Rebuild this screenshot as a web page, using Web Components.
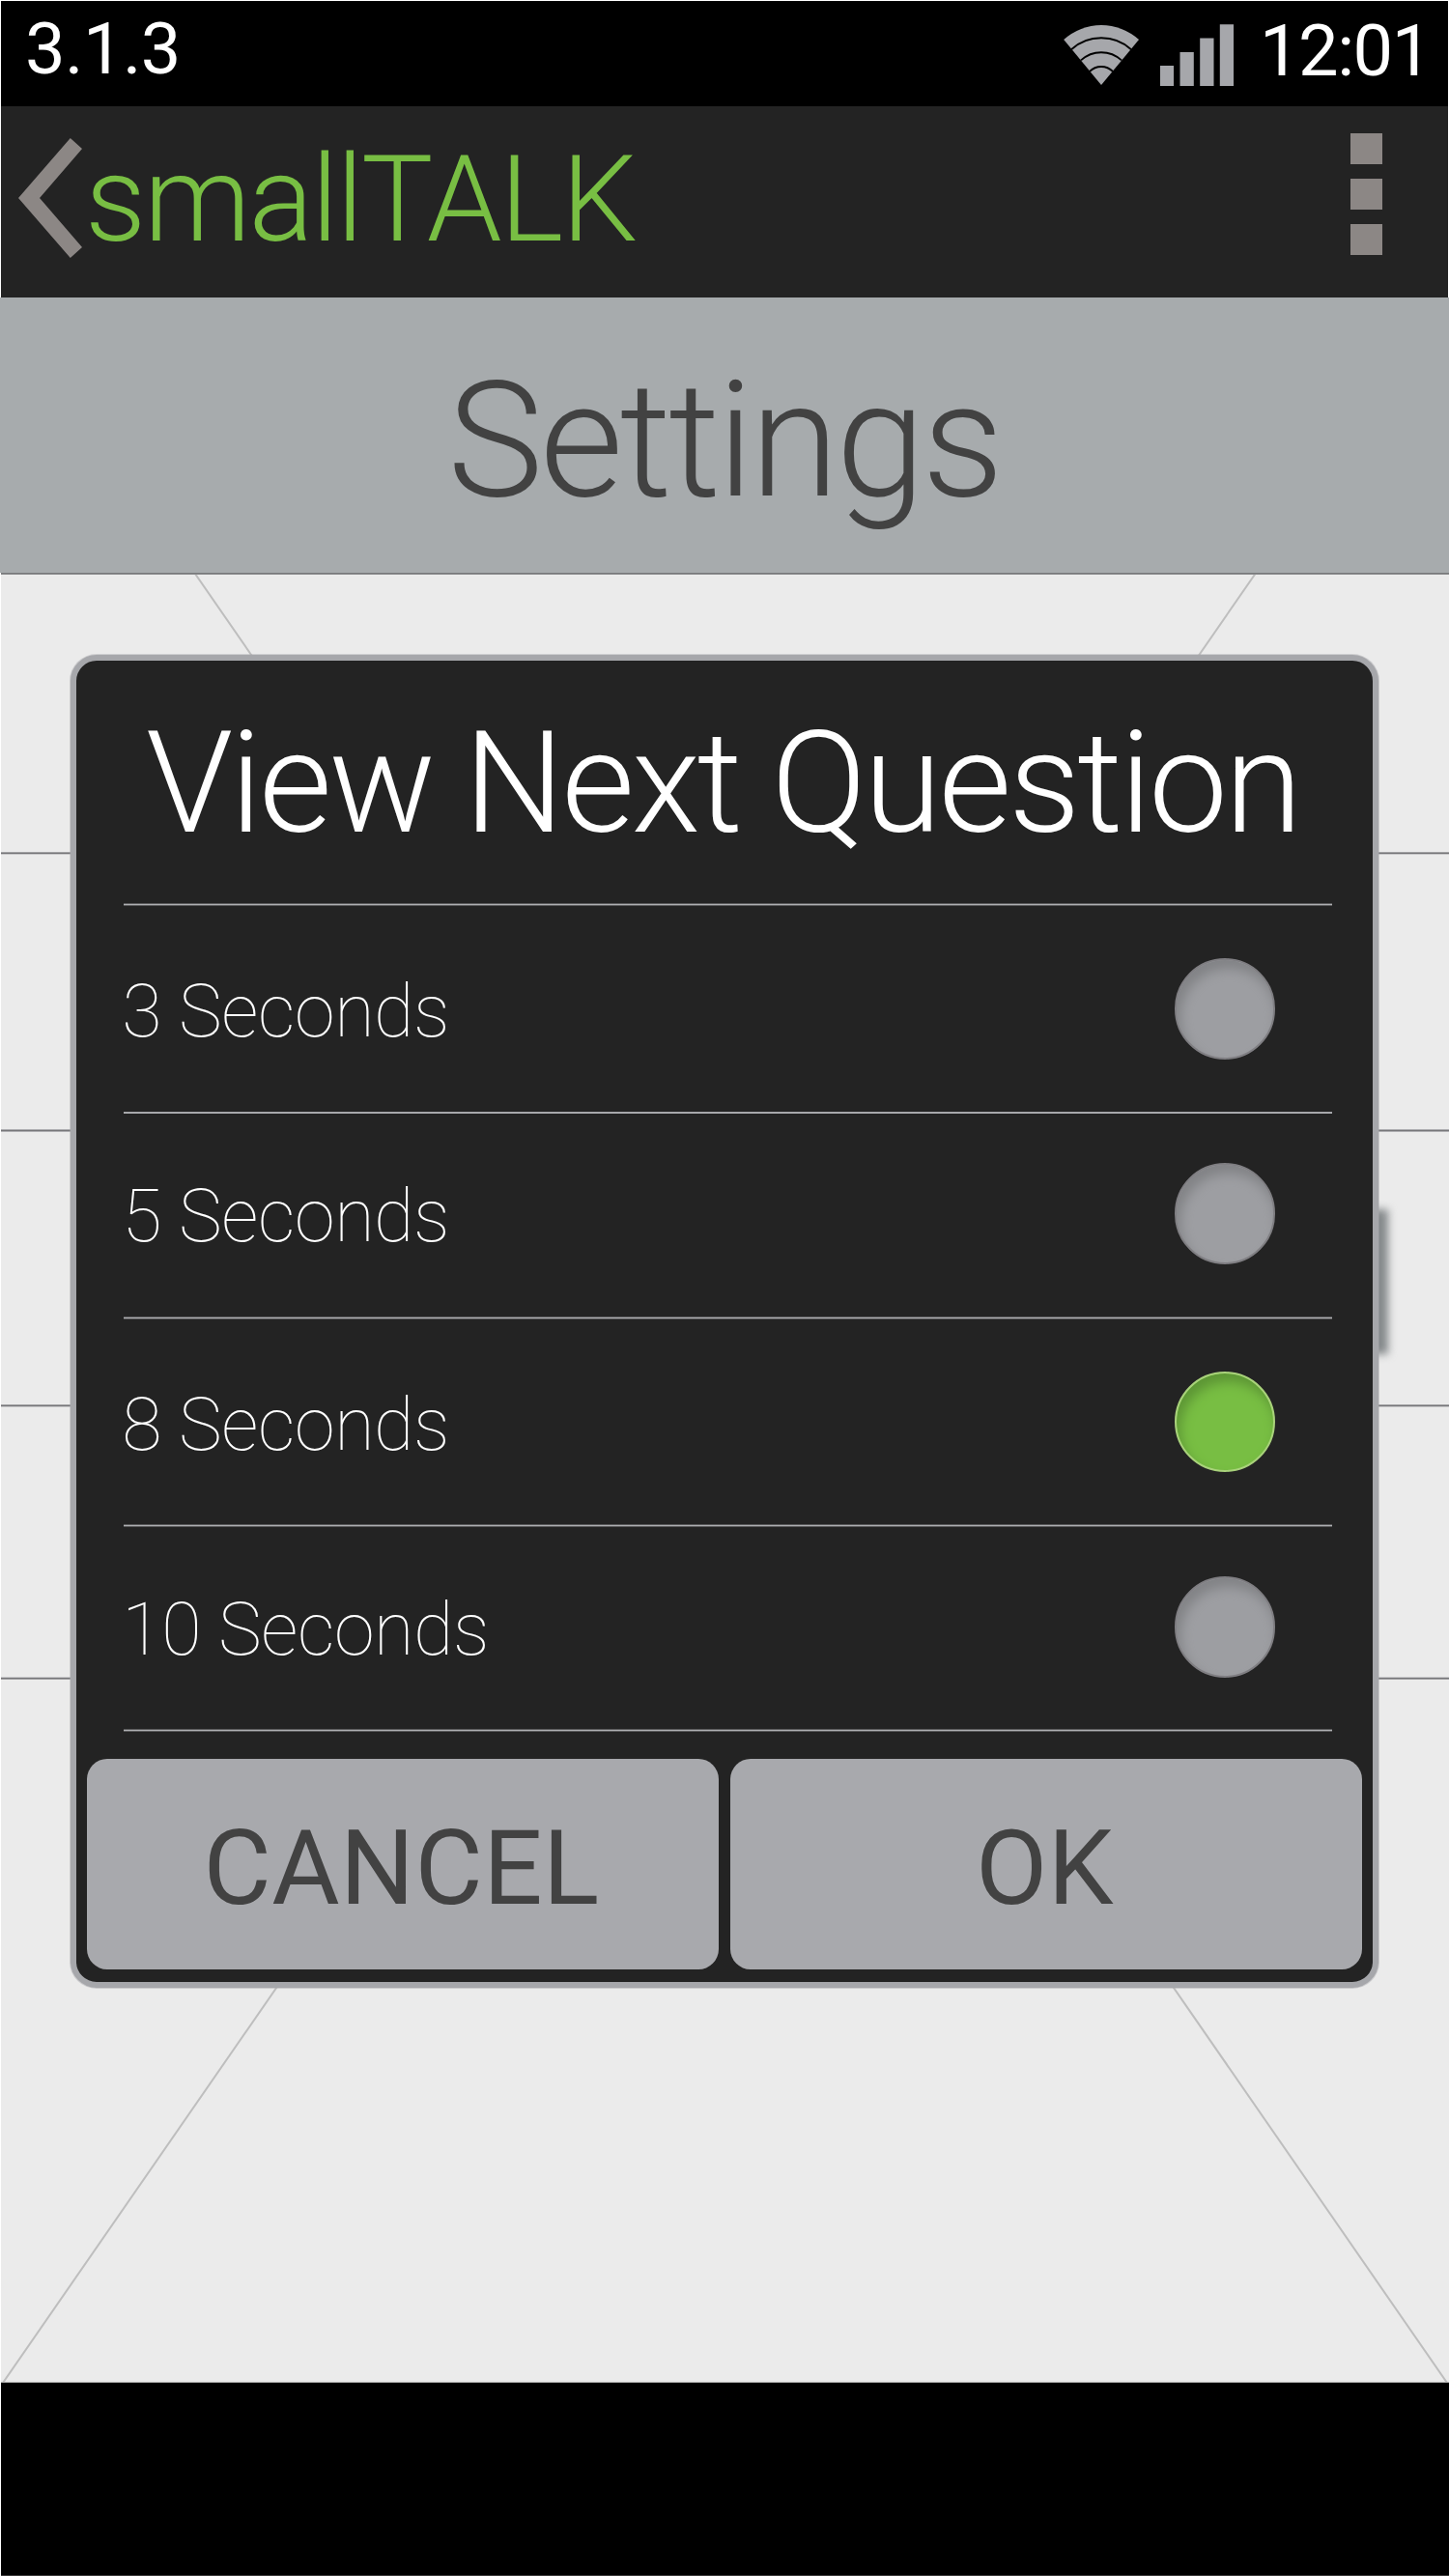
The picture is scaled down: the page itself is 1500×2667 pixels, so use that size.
<!DOCTYPE html>
<html lang="en">
<head>
<meta charset="utf-8">
<title>smallTALK Settings</title>
<style>
html,body{margin:0;padding:0;background:#fff}
body{width:1500px;height:2667px;overflow:hidden;font-family:Roboto,"Liberation Sans",sans-serif}
</style>
</head>
<body>
<phone-screen>
  <status-bar slot="top" version="3.1.3" time="12:01"></status-bar>
  <action-bar slot="top">smallTALK</action-bar>
  <page-heading slot="top">Settings</page-heading>
  <settings-list slot="content"></settings-list>
  <choice-dialog slot="dialog">
    <span slot="title">View Next Question</span>
    <choice-row style="--h:213px;--t:54px">3 Seconds</choice-row>
    <rule-line kind="solid"></rule-line>
    <choice-row style="--h:210px;--t:51px">5 Seconds</choice-row>
    <rule-line></rule-line>
    <choice-row style="--h:212px;--t:53.5px" checked>8 Seconds</choice-row>
    <rule-line></rule-line>
    <choice-row style="--h:209px;--t:51px">10 Seconds</choice-row>
    <rule-line></rule-line>
    <dialog-button slot="actions">CANCEL</dialog-button>
    <dialog-button slot="actions">OK</dialog-button>
  </choice-dialog>
</phone-screen>
<script>
const define = (name, html) => customElements.define(name, class extends HTMLElement {
  constructor() {
    super();
    this.attachShadow({mode: 'open'}).innerHTML = typeof html === 'function' ? html(this) : html;
  }
});

define('phone-screen', `
<style>
:host{display:flex;flex-direction:column;position:relative;width:1500px;height:2667px;background:#fff}
.nav{height:200px;margin-left:1px;background:#000;border-bottom:1px solid #3c3a3b;box-sizing:border-box}
.layer{position:absolute;left:73px;top:678px}
</style>
<slot name="top"></slot>
<slot name="content"></slot>
<div class="nav"></div>
<div class="layer"><slot name="dialog"></slot></div>`);

define('status-bar', el => `
<style>
:host{display:flex;align-items:flex-start;box-sizing:border-box;height:109px;margin:1px 1px 0 1px;padding-left:25px;background:#000;color:#fff;font-size:74px;line-height:74px}
.v{margin-top:13px;letter-spacing:-.6px}
.c{margin-top:15px;width:195px;letter-spacing:-1.5px}
.w{margin:24px 22px 0 auto}
.s{margin:24px 27px 0 0}
svg{display:block;flex:none}
</style>
<span class="v">${el.getAttribute('version')}</span>
<svg class="w" width="78" height="64" viewBox="1101 25 78 64">
  <path fill="#a6a7ab" d="M1140 88 1101.2 41A58.2 58.2 0 0 1 1179 41Z"/>
  <g fill="none" stroke="#000" stroke-width="1.9">
    <path d="M1109 51.2A46.4 46.4 0 0 1 1171 51.2"/>
    <path d="M1119 62.4A31 31 0 0 1 1161 62.4"/>
    <path d="M1128 74A17 17 0 0 1 1152 74"/>
  </g>
</svg>
<svg class="s" width="76" height="64" viewBox="1201 25 76 64" fill="#a6a7ab">
  <path d="M1201 68h14v21h-14zM1221.5 54h14.3v35h-14.3zM1242.2 39.5h14.3v49.5h-14.3zM1262.8 25.2h14.2v63.8h-14.2z"/>
</svg>
<span class="c">${el.getAttribute('time')}</span>`);

define('action-bar', `
<style>
:host{display:flex;align-items:flex-start;box-sizing:border-box;height:198px;margin:0 1px;background:#232323;color:#78be43;font-size:124.7px;line-height:125px;font-weight:300;letter-spacing:-2.1px}
.b{margin:33px 0 0 18px}
span{margin:34px 0 0 2px}
.d{display:flex;flex-direction:column;gap:14.6px;margin:28px 68.5px 0 auto}
i{width:32.5px;height:32.4px;background:#8c8785}
svg{display:block;flex:none}
</style>
<svg class="b" width="67" height="124" viewBox="19 143 67 124"><path fill="#8c8785" d="M72.8 143 85 154 41 205 85 256 72.8 267 19 205Z"/></svg>
<span><slot></slot></span>
<div class="d"><i></i><i></i><i></i></div>`);

define('page-heading', `
<style>
:host{display:flex;justify-content:center;box-sizing:border-box;height:285px;padding-top:65px;background:#a7abad;color:#424242;font-size:167px;line-height:167px;font-weight:300;letter-spacing:-3.35px}
span{padding-right:1px}
</style>
<span><slot></slot></span>`);

define('settings-list', `
<style>
:host{display:flex;flex-direction:column;position:relative;height:1874px;margin-left:1px;background:#ebebeb;box-sizing:border-box;border-bottom:1px solid #a2a2a2}
.top{height:2px;background:linear-gradient(#77787a 1px,#8f9092 1px)}
.row{height:var(--h);box-sizing:border-box}
.line{height:3px;background:linear-gradient(var(--a) 1px,#77777a 1px 2px,var(--b) 2px)}
.shade{position:absolute;left:1350px;top:659px;width:86px;height:150px;background:#85898b;filter:blur(4px)}
svg{position:absolute;left:0;top:2px;display:block}
</style>
<div class="top"></div>
<div class="row" style="--h:287px"></div><div class="line" style="--a:#a0a0a2;--b:#c8c8c9"></div>
<div class="row" style="--h:284px"></div><div class="line" style="--a:#adadb0;--b:#adadb0"></div>
<div class="row" style="--h:282px"></div><div class="line" style="--a:#a0a0a2;--b:#c8c8c9"></div>
<div class="row" style="--h:279px"></div><div class="line" style="--a:#c8c8c9;--b:#a0a0a2"></div>
<svg width="1499" height="1871" viewBox="1 595 1499 1871"><path d="M202 594 1498 2467M1299.5 594 3 2467" fill="none" stroke="#bebebe" stroke-width="2"/></svg>
<div class="shade"></div>`);

define('choice-dialog', `
<style>
:host{display:flex;flex-direction:column;box-sizing:border-box;width:1354px;height:1380px;background:#232323;border:6px solid #a6a7ab;border-radius:27px;box-shadow:0 0 0 1px rgba(166,167,171,.45)}
header{box-sizing:border-box;height:251px;padding:54px 0 0 72px;color:#fff;font-size:146.3px;line-height:146px;font-weight:300;letter-spacing:-3.1px;white-space:nowrap}
section{display:flex;flex-direction:column;margin:0 42px 0 49px}
footer{display:flex;gap:12px;padding:28px 11px 0}
</style>
<header><slot name="title"></slot></header>
<section><rule-line></rule-line><slot></slot></section>
<footer><slot name="actions"></slot></footer>`);

define('rule-line', `
<style>
:host{display:block;height:3px;background:linear-gradient(#5b5b5c 1px,#aeafb2 1px 2px,#5b5b5c 2px)}
:host([kind=solid]){height:2px;background:#a6a7ab}
</style>`);

define('choice-row', `
<style>
:host{display:flex;align-items:flex-start;justify-content:space-between;box-sizing:border-box;height:var(--h);padding:var(--t) 59px 0 0;color:#fff;font-size:75.5px;line-height:76px;font-weight:100;letter-spacing:-.35px;
--base:#9d9ea2;--shade:#828386;--edge:#7f7e82}
:host([checked]){--base:#78be43;--shade:#5d9635;--edge:#a9d27b}
span{margin:17px 0 0 -1.7px}
i{width:104.5px;height:104.5px;box-sizing:border-box;border-radius:50%;border:2px solid var(--edge);background:var(--base);box-shadow:inset 4px 9px 12px var(--shade)}
</style>
<span><slot></slot></span><i></i>`);

define('dialog-button', `
<style>
:host{display:flex;justify-content:center;box-sizing:border-box;flex:1;height:217.5px;padding:59px 3px 0 0;border-radius:21px;background:#a8a9ad;color:#424242;font-size:108px;line-height:108px;letter-spacing:.4px}
</style>
<span><slot></slot></span>`);
</script>
</body>
</html>
